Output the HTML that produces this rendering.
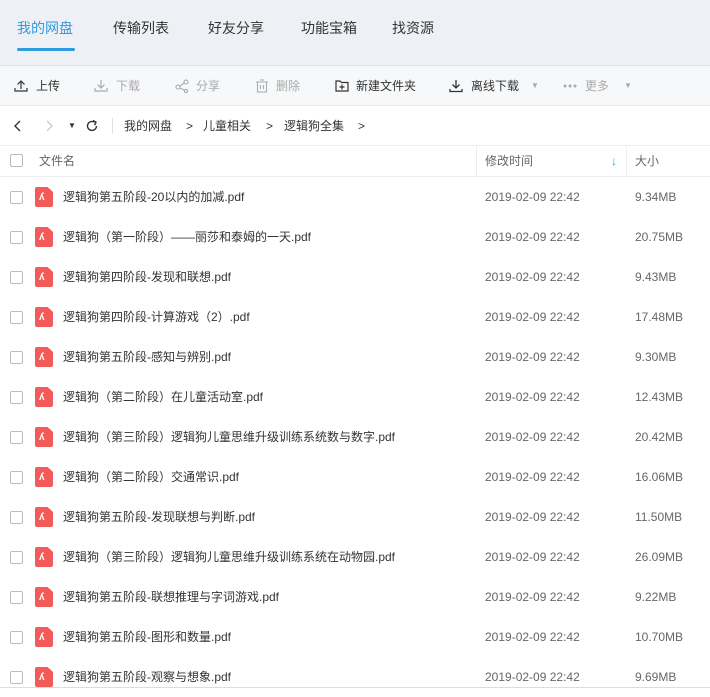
<!DOCTYPE html><html><head><meta charset="utf-8"><style>
*{margin:0;padding:0;box-sizing:border-box}
body{width:710px;height:697px;overflow:hidden;background:#fff;font-family:"Liberation Sans","Noto Sans CJK SC",sans-serif;color:#333;position:relative}
.nav{height:66px;background:#eef0f5;border-bottom:1px solid #dfe2e8;position:relative}
.nav span{position:absolute;top:0;line-height:56px;font-size:14px;color:#333}
.nav .on{color:#2e9cde}
.nav i{position:absolute;left:17px;top:48px;width:58px;height:3px;background:#2e9cde;border-radius:2px}
.tb{height:40px;background:#f7f8fa;border-bottom:1px solid #e8eaee;position:relative;font-size:12px}
.tb span{position:absolute;top:0;line-height:40px}
.tb svg{position:absolute;top:13px}
.g{color:#aaa}
.bc{height:40px;border-bottom:1px solid #eceef1;position:relative;font-size:12px}
.bc span{position:absolute;top:0;line-height:40px}
.hd{height:31px;border-bottom:1px solid #eceef1;position:relative;font-size:12px;color:#666}
.hd span{position:absolute;top:0;line-height:30px}
.cb{position:absolute;left:10px;width:13px;height:13px;border:1px solid #bbb;border-radius:2px;background:#fff}
.row{height:40px;position:relative;font-size:12px}
.row span{position:absolute;top:0;line-height:40px}
.ic{position:absolute;left:35px;top:10px;width:18px;height:20px;background:#f35b5b;border-radius:2px;clip-path:polygon(0 0,70% 0,100% 25%,100% 100%,0 100%)}
.ic b{position:absolute;left:4px;top:5px;color:#fff;font-size:10px;font-weight:bold}
.t{left:485px;color:#666}.s{left:635px;color:#666}
</style></head><body>
<div class="nav"><span class="on" style="left:17px">我的网盘</span><span style="left:113px">传输列表</span><span style="left:208px">好友分享</span><span style="left:301px">功能宝箱</span><span style="left:392px">找资源</span><i></i></div>
<div class="tb">
<svg style="left:14px" width="14" height="14" viewBox="0 0 14 14" fill="none" stroke="#333" stroke-width="1.2"><path d="M7 10V2M3.5 5.5L7 2l3.5 3.5M1 9v3h12V9"/></svg><span style="left:36px">上传</span>
<svg style="left:94px" width="14" height="14" viewBox="0 0 14 14" fill="none" stroke="#aaa" stroke-width="1.2"><path d="M7 1v8M3.5 5.5L7 9l3.5-3.5M1 9v3h12V9"/></svg><span class="g" style="left:116px">下载</span>
<svg style="left:175px" width="14" height="14" viewBox="0 0 14 14" fill="none" stroke="#aaa" stroke-width="1.1"><circle cx="3" cy="8" r="2"/><circle cx="11" cy="3" r="2"/><circle cx="11" cy="12" r="1.6"/><path d="M4.7 7l4.6-3M4.7 9l4.8 2.3"/></svg><span class="g" style="left:196px">分享</span>
<svg style="left:255px" width="14" height="14" viewBox="0 0 14 14" fill="none" stroke="#aaa" stroke-width="1.1"><path d="M1 3h12M5 1h4M2.5 3v10h9V3M5.5 6v4M8.5 6v4"/></svg><span class="g" style="left:276px">删除</span>
<svg style="left:335px" width="14" height="14" viewBox="0 0 14 14" fill="none" stroke="#333" stroke-width="1.2"><path d="M1 2h4l1.5 1.5H13V12H1zM7 5.5v5M4.5 8h5"/></svg><span style="left:356px">新建文件夹</span>
<svg style="left:449px" width="14" height="14" viewBox="0 0 14 14" fill="none" stroke="#333" stroke-width="1.3"><path d="M7 1v8M3.5 5.5L7 9l3.5-3.5M1 10v2.5h12V10"/></svg><span style="left:471px">离线下载</span><span class="g" style="left:531px;font-size:8px">▼</span>
<svg style="left:563px;top:18px" width="14" height="4" viewBox="0 0 14 4" fill="#aaa"><circle cx="2" cy="2" r="1.5"/><circle cx="7" cy="2" r="1.5"/><circle cx="12" cy="2" r="1.5"/></svg><span class="g" style="left:585px">更多</span><span class="g" style="left:624px;font-size:8px">▼</span>
</div>
<div class="bc">
<svg style="position:absolute;left:13px;top:14px" width="10" height="12" viewBox="0 0 10 12" fill="none" stroke="#333" stroke-width="1.4"><path d="M7 1L2 6l5 5"/></svg>
<svg style="position:absolute;left:44px;top:14px" width="10" height="12" viewBox="0 0 10 12" fill="none" stroke="#ccc" stroke-width="1.4"><path d="M3 1l5 5-5 5"/></svg>
<span style="left:68px;font-size:8px">▼</span>
<svg style="position:absolute;left:85px;top:13px" width="14" height="14" viewBox="0 0 14 14" fill="none" stroke="#333" stroke-width="1.4"><path d="M11.5 7A4.5 4.5 0 1 1 9.5 3.2"/><path d="M8 1.5l3 1.7-1.4 3" /></svg>
<i style="position:absolute;left:112px;top:12px;width:1px;height:16px;background:#e0e0e0"></i>
<span style="left:124px">我的网盘</span><span style="left:186px">&gt;</span><span style="left:203px">儿童相关</span><span style="left:266px">&gt;</span><span style="left:284px">逻辑狗全集</span><span style="left:358px">&gt;</span>
</div>
<div class="hd"><i class="cb" style="top:8px"></i><span style="left:39px">文件名</span>
<i style="position:absolute;left:476px;top:0;width:1px;height:30px;background:#eceef1"></i><span style="left:485px">修改时间</span><span style="left:611px;color:#2e9cde;font-weight:bold">↓</span>
<i style="position:absolute;left:626px;top:0;width:1px;height:30px;background:#eceef1"></i><span style="left:635px">大小</span></div>
<div class="row"><i class="cb" style="top:14px"></i><div class="ic"><b>ʎ</b></div><span style="left:63px">逻辑狗第五阶段-20以内的加减.pdf</span><span class="t">2019-02-09 22:42</span><span class="s">9.34MB</span></div>
<div class="row"><i class="cb" style="top:14px"></i><div class="ic"><b>ʎ</b></div><span style="left:63px">逻辑狗（第一阶段）——丽莎和泰姆的一天.pdf</span><span class="t">2019-02-09 22:42</span><span class="s">20.75MB</span></div>
<div class="row"><i class="cb" style="top:14px"></i><div class="ic"><b>ʎ</b></div><span style="left:63px">逻辑狗第四阶段-发现和联想.pdf</span><span class="t">2019-02-09 22:42</span><span class="s">9.43MB</span></div>
<div class="row"><i class="cb" style="top:14px"></i><div class="ic"><b>ʎ</b></div><span style="left:63px">逻辑狗第四阶段-计算游戏（2）.pdf</span><span class="t">2019-02-09 22:42</span><span class="s">17.48MB</span></div>
<div class="row"><i class="cb" style="top:14px"></i><div class="ic"><b>ʎ</b></div><span style="left:63px">逻辑狗第五阶段-感知与辨别.pdf</span><span class="t">2019-02-09 22:42</span><span class="s">9.30MB</span></div>
<div class="row"><i class="cb" style="top:14px"></i><div class="ic"><b>ʎ</b></div><span style="left:63px">逻辑狗（第二阶段）在儿童活动室.pdf</span><span class="t">2019-02-09 22:42</span><span class="s">12.43MB</span></div>
<div class="row"><i class="cb" style="top:14px"></i><div class="ic"><b>ʎ</b></div><span style="left:63px">逻辑狗（第三阶段）逻辑狗儿童思维升级训练系统数与数字.pdf</span><span class="t">2019-02-09 22:42</span><span class="s">20.42MB</span></div>
<div class="row"><i class="cb" style="top:14px"></i><div class="ic"><b>ʎ</b></div><span style="left:63px">逻辑狗（第二阶段）交通常识.pdf</span><span class="t">2019-02-09 22:42</span><span class="s">16.06MB</span></div>
<div class="row"><i class="cb" style="top:14px"></i><div class="ic"><b>ʎ</b></div><span style="left:63px">逻辑狗第五阶段-发现联想与判断.pdf</span><span class="t">2019-02-09 22:42</span><span class="s">11.50MB</span></div>
<div class="row"><i class="cb" style="top:14px"></i><div class="ic"><b>ʎ</b></div><span style="left:63px">逻辑狗（第三阶段）逻辑狗儿童思维升级训练系统在动物园.pdf</span><span class="t">2019-02-09 22:42</span><span class="s">26.09MB</span></div>
<div class="row"><i class="cb" style="top:14px"></i><div class="ic"><b>ʎ</b></div><span style="left:63px">逻辑狗第五阶段-联想推理与字词游戏.pdf</span><span class="t">2019-02-09 22:42</span><span class="s">9.22MB</span></div>
<div class="row"><i class="cb" style="top:14px"></i><div class="ic"><b>ʎ</b></div><span style="left:63px">逻辑狗第五阶段-图形和数量.pdf</span><span class="t">2019-02-09 22:42</span><span class="s">10.70MB</span></div>
<div class="row" style="border-bottom:1px solid #ddd;height:31px"><i class="cb" style="top:14px"></i><div class="ic"><b>ʎ</b></div><span style="left:63px">逻辑狗第五阶段-观察与想象.pdf</span><span class="t">2019-02-09 22:42</span><span class="s">9.69MB</span></div>
</body></html>
